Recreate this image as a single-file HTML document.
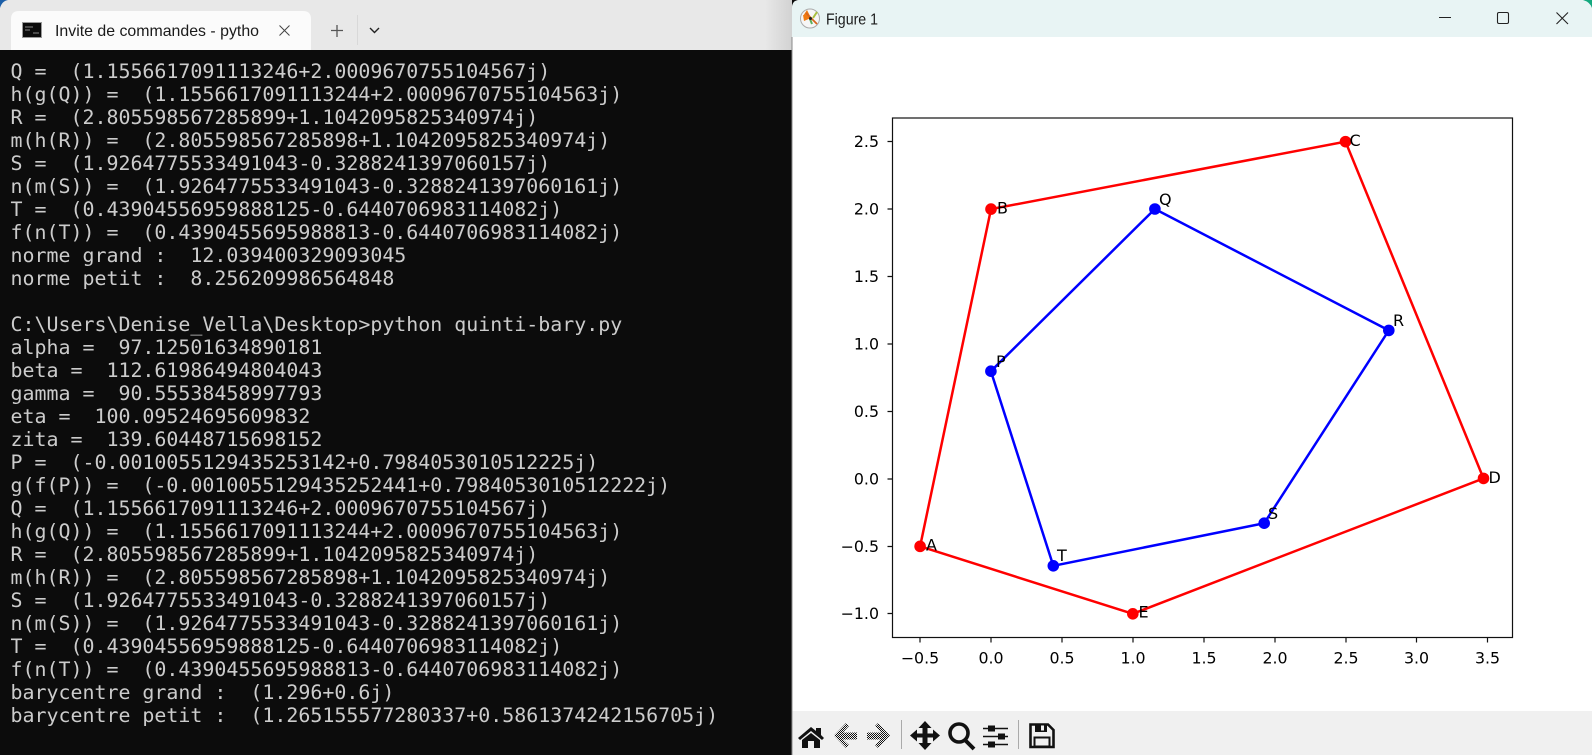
<!DOCTYPE html>
<html><head><meta charset="utf-8">
<style>
html,body{margin:0;padding:0;width:1592px;height:755px;overflow:hidden;background:#0c0c0c}
#term{position:absolute;left:10.5px;top:60px;margin:0;font:19.93px/23px "DejaVu Sans Mono","Liberation Mono",monospace;color:#cccccc;white-space:pre}
svg{position:absolute;left:0;top:0}
</style></head><body>
<pre id="term">Q =  (1.1556617091113246+2.0009670755104567j)
h(g(Q)) =  (1.1556617091113244+2.0009670755104563j)
R =  (2.805598567285899+1.1042095825340974j)
m(h(R)) =  (2.805598567285898+1.1042095825340974j)
S =  (1.9264775533491043-0.3288241397060157j)
n(m(S)) =  (1.9264775533491043-0.3288241397060161j)
T =  (0.43904556959888125-0.6440706983114082j)
f(n(T)) =  (0.4390455695988813-0.6440706983114082j)
norme grand :  12.039400329093045
norme petit :  8.256209986564848

C:\Users\Denise_Vella\Desktop&gt;python quinti-bary.py
alpha =  97.12501634890181
beta =  112.61986494804043
gamma =  90.55538458997793
eta =  100.09524695609832
zita =  139.60448715698152
P =  (-0.0010055129435253142+0.7984053010512225j)
g(f(P)) =  (-0.0010055129435252441+0.7984053010512222j)
Q =  (1.1556617091113246+2.0009670755104567j)
h(g(Q)) =  (1.1556617091113244+2.0009670755104563j)
R =  (2.805598567285899+1.1042095825340974j)
m(h(R)) =  (2.805598567285898+1.1042095825340974j)
S =  (1.9264775533491043-0.3288241397060157j)
n(m(S)) =  (1.9264775533491043-0.3288241397060161j)
T =  (0.43904556959888125-0.6440706983114082j)
f(n(T)) =  (0.4390455695988813-0.6440706983114082j)
barycentre grand :  (1.296+0.6j)
barycentre petit :  (1.265155577280337+0.5861374242156705j)</pre>
<svg width="1592" height="755" viewBox="0 0 1592 755" xmlns="http://www.w3.org/2000/svg">
<defs>
<linearGradient id="sh" x1="0" x2="1" y1="0" y2="0"><stop offset="0" stop-color="#e8e8e8"/><stop offset="1" stop-color="#d2d2d2"/></linearGradient>
<pattern id="dith" width="2" height="2" patternUnits="userSpaceOnUse"><rect width="2" height="2" fill="#f0f0f0"/><rect width="1" height="1" fill="#111"/><rect x="1" y="1" width="1" height="1" fill="#111"/></pattern>
</defs>
<!-- terminal tab bar -->
<rect x="0" y="0" width="792" height="50" fill="#e8e8e8"/>
<rect x="765" y="0" width="27" height="50" fill="url(#sh)"/>
<path d="M0 0H8Q2 1 0 8Z" fill="#1c5fa8"/>
<path d="M11 50V19Q11 11 19 11H303Q311 11 311 19V50Z" fill="#fbfbfb"/>
<rect x="22.5" y="22.5" width="19" height="15" fill="#0c0c0c" stroke="#9a9a9a" stroke-width="1"/>
<path d="M25 27h8M25 30h5M33 33h6" stroke="#888" stroke-width="1"/>
<text x="55" y="36" font-family="Liberation Sans,sans-serif" font-size="15.800" fill="#1a1a1a" textLength="204" lengthAdjust="spacingAndGlyphs">Invite de commandes - pytho</text>
<path d="M279.5 25.5l10 10M289.5 25.5l-10 10" stroke="#444" stroke-width="1" fill="none"/>
<path d="M337 25v12M331 30.500h12" stroke="#555" stroke-width="1.300" fill="none"/>
<path d="M357.500 15v30" stroke="#d8d8d8" stroke-width="1"/>
<path d="M370 28l4.500 4.500 4.500-4.500" stroke="#222" stroke-width="1.400" fill="none"/>
<!-- figure window -->
<path d="M792 755V8Q792 0 800 0H1592V755Z" fill="#ffffff"/>
<path d="M792 37V8Q792 0 800 0H1592V37Z" fill="#e8f4f4"/>
<path d="M1583 0H1592V8Q1590 2 1583 0Z" fill="#14a87e"/>
<path d="M792 37V755" stroke="#8a8a8a" stroke-width="1"/>
<circle cx="810" cy="18.500" r="9.500" fill="#f6f6f6" stroke="#aaa" stroke-width="1"/>
<path d="M807 10l4 8 -8-2zM803 15l8 3 -7 3z" fill="#f07a10"/>
<path d="M806 13l11 11" stroke="#d8641a" stroke-width="1.800"/>
<path d="M813 18l4-6" stroke="#a8c040" stroke-width="2"/>
<path d="M810 19l2 5" stroke="#5cae5c" stroke-width="2"/>
<circle cx="810.500" cy="18.500" r="1.500" fill="#222"/>
<text x="826" y="24.500" font-family="Liberation Sans,sans-serif" font-size="16" fill="#1a1a1a" textLength="52" lengthAdjust="spacingAndGlyphs">Figure 1</text>
<path d="M1439 17.500h12" stroke="#222" stroke-width="1"/>
<rect x="1497.500" y="12.500" width="11" height="11" rx="1.500" fill="none" stroke="#222" stroke-width="1.100"/>
<path d="M1556.500 12.500l11.500 11.500M1568 12.500l-11.500 11.500" stroke="#222" stroke-width="1.100" fill="none"/>
<!-- axes -->
<rect x="892.500" y="118" width="620" height="519.500" fill="#fff" stroke="#111" stroke-width="1.200"/>
<g stroke="#111" stroke-width="1.200" id="ticks">
<path d="M920 637.500v5M991 637.500v5M1062 637.500v5M1133 637.500v5M1204 637.500v5M1275 637.500v5M1346 637.500v5M1416.500 637.500v5M1487.500 637.500v5"/>
<path d="M892.500 141.500h-5M892.500 209h-5M892.500 276.500h-5M892.500 344h-5M892.500 411.500h-5M892.500 479h-5M892.500 546.500h-5M892.500 613.500h-5"/>
</g>
<g font-family="DejaVu Sans,sans-serif" font-size="15.800" fill="#000">
<g text-anchor="middle">
<text x="920" y="663.500">−0.5</text><text x="991" y="663.500">0.0</text><text x="1062" y="663.500">0.5</text><text x="1133" y="663.500">1.0</text><text x="1204" y="663.500">1.5</text><text x="1275" y="663.500">2.0</text><text x="1346" y="663.500">2.5</text><text x="1416.500" y="663.500">3.0</text><text x="1487.500" y="663.500">3.5</text>
</g>
<g text-anchor="end">
<text x="879" y="147">2.5</text><text x="879" y="214.500">2.0</text><text x="879" y="282">1.5</text><text x="879" y="349.500">1.0</text><text x="879" y="417">0.5</text><text x="879" y="484.500">0.0</text><text x="879" y="552">−0.5</text><text x="879" y="619">−1.0</text>
</g>
</g>
<!-- polygons -->
<polyline points="920.100,546.350 991,209.100 1345.500,141.650 1483.500,478.400 1132.800,613.800 920.100,546.350" fill="none" stroke="#ff0000" stroke-width="2.500"/>
<g fill="#ff0000"><circle cx="920.100" cy="546.350" r="5.800"/><circle cx="991" cy="209.100" r="5.800"/><circle cx="1345.500" cy="141.650" r="5.800"/><circle cx="1483.500" cy="478.400" r="5.800"/><circle cx="1132.800" cy="613.800" r="5.800"/></g>
<polyline points="990.900,371.200 1154.900,209 1388.800,330.400 1264.200,523.200 1053.300,565.800 990.900,371.200" fill="none" stroke="#0000ff" stroke-width="2.500"/>
<g fill="#0000ff"><circle cx="990.900" cy="371.200" r="5.800"/><circle cx="1154.900" cy="209" r="5.800"/><circle cx="1388.800" cy="330.400" r="5.800"/><circle cx="1264.200" cy="523.200" r="5.800"/><circle cx="1053.300" cy="565.800" r="5.800"/></g>
<g font-family="DejaVu Sans,sans-serif" font-size="16" fill="#000">
<text x="926" y="550.500">A</text><text x="997" y="213.500">B</text><text x="1349.500" y="146">C</text><text x="1488.500" y="483">D</text><text x="1138.500" y="617.500">E</text>
<text x="996" y="367">P</text><text x="1159" y="205">Q</text><text x="1393" y="326">R</text><text x="1268" y="519">S</text><text x="1057" y="561">T</text>
</g>
<!-- toolbar -->
<rect x="792.500" y="711" width="800" height="44" fill="#f0f0f0"/>
<path d="M798 738L811 727 816 731V728H821V735L824 738 822 740 811 731 800 740Z" fill="#111"/>
<path d="M802 740L811 733 820 740V748H814V741H808V748H802Z" fill="#111"/>
<path d="M834 735.500L846 723 849 726 843 732.500H857V739.500H843L849 745 846 748Z" fill="url(#dith)"/>
<path d="M890 735.500L878 723 875 726 881 732.500H867V739.500H881L875 745 878 748Z" fill="url(#dith)"/>
<path d="M901.500 720v29M1018.500 720v29" stroke="#aaaaaa" stroke-width="1"/>
<path d="M925 721l6.500 7h-4v5.500h5.500v-4l7 6-7 6v-4h-5.500v5.500h4l-6.500 7-6.500-7h4v-5.500h-5.500v4l-7-6 7-6v4h5.500v-5.500h-4z" fill="#111"/>
<circle cx="959" cy="733" r="9" fill="none" stroke="#111" stroke-width="3.600"/>
<path d="M965 740l9 9" stroke="#111" stroke-width="4" fill="none"/>
<path d="M983 728.500h25M983 736.500h25M983 744.500h25" stroke="#111" stroke-width="1.500"/>
<rect x="988" y="725.500" width="7" height="6" fill="#111"/><rect x="998" y="733.500" width="7" height="6" fill="#111"/><rect x="988" y="741.500" width="7" height="6" fill="#111"/>
<path d="M1030.500 724.500H1048L1053.500 730V747H1030.500Z" fill="none" stroke="#111" stroke-width="2.600"/>
<path d="M1035 724.500h12v7.500h-12z" fill="#111"/><rect x="1041" y="725.500" width="3" height="5" fill="#f0f0f0"/>
<rect x="1034.500" y="737.500" width="15" height="9" fill="none" stroke="#111" stroke-width="2"/>
</svg>
</body></html>
